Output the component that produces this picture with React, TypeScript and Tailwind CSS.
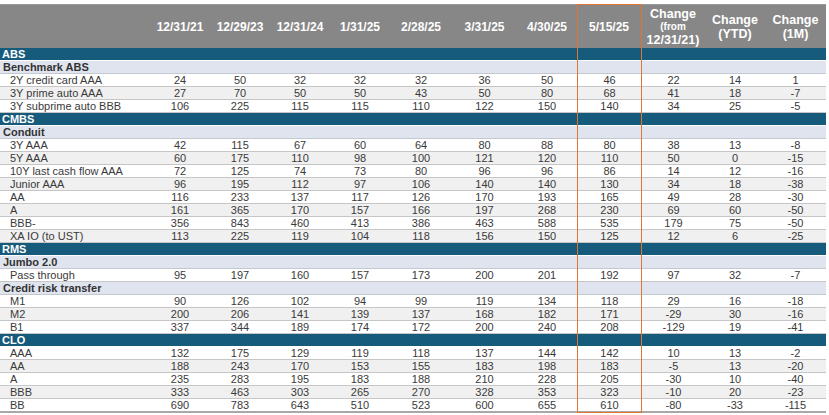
import React from "react";

type Row =
  | { kind: "section"; label: string }
  | { kind: "sub"; label: string }
  | { kind: "data"; label: string; values: number[]; shade?: boolean };

const grid =
  "grid grid-cols-[150px_60px_60px_60px_60px_62px_65px_60px_64px_64px_60px_61px]";

const rows: Row[] = [
  { kind: "section", label: "ABS" },
  { kind: "sub", label: "Benchmark ABS" },
  { kind: "data", label: "2Y credit card AAA", values: [24, 50, 32, 32, 32, 36, 50, 46, 22, 14, 1] },
  { kind: "data", label: "3Y prime auto AAA", values: [27, 70, 50, 50, 43, 50, 80, 68, 41, 18, -7], shade: true },
  { kind: "data", label: "3Y subprime auto BBB", values: [106, 225, 115, 115, 110, 122, 150, 140, 34, 25, -5] },
  { kind: "section", label: "CMBS" },
  { kind: "sub", label: "Conduit" },
  { kind: "data", label: "3Y AAA", values: [42, 115, 67, 60, 64, 80, 88, 80, 38, 13, -8] },
  { kind: "data", label: "5Y AAA", values: [60, 175, 110, 98, 100, 121, 120, 110, 50, 0, -15], shade: true },
  { kind: "data", label: "10Y last cash flow AAA", values: [72, 125, 74, 73, 80, 96, 96, 86, 14, 12, -16] },
  { kind: "data", label: "Junior AAA", values: [96, 195, 112, 97, 106, 140, 140, 130, 34, 18, -38], shade: true },
  { kind: "data", label: "AA", values: [116, 233, 137, 117, 126, 170, 193, 165, 49, 28, -30] },
  { kind: "data", label: "A", values: [161, 365, 170, 157, 166, 197, 268, 230, 69, 60, -50], shade: true },
  { kind: "data", label: "BBB-", values: [356, 843, 460, 413, 386, 463, 588, 535, 179, 75, -50] },
  { kind: "data", label: "XA IO (to UST)", values: [113, 225, 119, 104, 118, 156, 150, 125, 12, 6, -25], shade: true },
  { kind: "section", label: "RMS" },
  { kind: "sub", label: "Jumbo 2.0" },
  { kind: "data", label: "Pass through", values: [95, 197, 160, 157, 173, 200, 201, 192, 97, 32, -7] },
  { kind: "sub", label: "Credit risk transfer" },
  { kind: "data", label: "M1", values: [90, 126, 102, 94, 99, 119, 134, 118, 29, 16, -18] },
  { kind: "data", label: "M2", values: [200, 206, 141, 139, 137, 168, 182, 171, -29, 30, -16], shade: true },
  { kind: "data", label: "B1", values: [337, 344, 189, 174, 172, 200, 240, 208, -129, 19, -41] },
  { kind: "section", label: "CLO" },
  { kind: "data", label: "AAA", values: [132, 175, 129, 119, 118, 137, 144, 142, 10, 13, -2] },
  { kind: "data", label: "AA", values: [188, 243, 170, 153, 155, 183, 198, 183, -5, 13, -20], shade: true },
  { kind: "data", label: "A", values: [235, 283, 195, 183, 188, 210, 228, 205, -30, 10, -40] },
  { kind: "data", label: "BBB", values: [333, 463, 303, 265, 270, 328, 353, 323, -10, 20, -23], shade: true },
  { kind: "data", label: "BB", values: [690, 783, 643, 510, 523, 600, 655, 610, -80, -33, -115] },
];

const dates = ["12/31/21", "12/29/23", "12/31/24", "1/31/25", "2/28/25", "3/31/25", "4/30/25", "5/15/25"];

export default function App() {
  return (
    <div className="w-[829px] h-[415px] bg-white font-['Liberation_Sans',Arial,sans-serif] overflow-hidden">
      <div className="relative w-[826px] pt-[4px]">
        {/* header */}
        <div className={`${grid} h-[44px] bg-[#878787] text-white font-bold text-[12px] leading-[14px] border-t border-[#9a9a9a]`}>
          <div />
          {dates.map((d) => (
            <div key={d} className="flex items-center justify-center">
              {d}
            </div>
          ))}
          <div className="flex flex-col items-center justify-center text-[12.5px]">
            <span>Change</span>
            <span className="text-[10px] leading-[12px]">(from</span>
            <span>12/31/21)</span>
          </div>
          <div className="flex flex-col items-center justify-center text-[12.5px]">
            <span>Change</span>
            <span>(YTD)</span>
          </div>
          <div className="flex flex-col items-center justify-center text-[12.5px]">
            <span>Change</span>
            <span>(1M)</span>
          </div>
        </div>

        {rows.map((r, i) => {
          if (r.kind === "section") {
            return (
              <div
                key={i}
                className="h-[13px] bg-[#165b7b] border-b border-white text-white font-bold text-[11px] leading-[12px] pl-[2px]"
              >
                {r.label}
              </div>
            );
          }
          if (r.kind === "sub") {
            return (
              <div
                key={i}
                className="h-[13px] bg-[#dfe4ee] border-b border-[#c4c8d0] text-[#333] font-bold text-[11px] leading-[12px] pl-[3px]"
              >
                {r.label}
              </div>
            );
          }
          return (
            <div
              key={i}
              className={`${grid} h-[13px] border-b border-[#c6c6c6] text-[#3a3a3a] text-[11px] leading-[12px] ${
                r.shade ? "bg-[#f0f0f0]" : "bg-white"
              } ${i === rows.length - 1 ? "border-b-2 border-b-[#a8a8a8] h-[14px]" : ""}`}
            >
              <div className="pl-[10px] whitespace-nowrap">{r.label}</div>
              {r.values.map((v, j) => (
                <div
                  key={j}
                  className={`text-center ${j === 7 || j === 8 ? "border-l border-[#a9a9a9]" : ""}`}
                >
                  {v}
                </div>
              ))}
            </div>
          );
        })}

        {/* highlighted current column */}
        <div className="absolute left-[577px] top-[4px] w-[65px] h-[409px] border-[1.5px] border-[#e2742f] pointer-events-none" />
      </div>
    </div>
  );
}
